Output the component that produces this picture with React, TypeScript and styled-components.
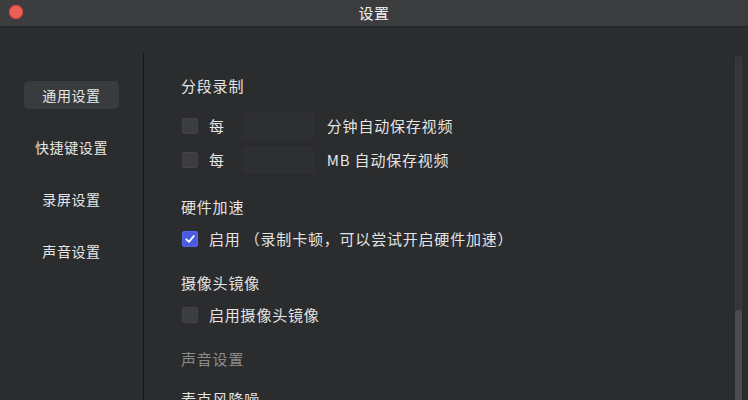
import React from "react";
import styled, { createGlobalStyle } from "styled-components";

const GlobalStyle = createGlobalStyle`
  html, body {
    margin: 0;
    padding: 0;
    background: #2b2c2e;
  }
  body {
    font-family: "Noto Sans CJK SC", "Noto Sans", sans-serif;
    overflow: hidden;
  }
`;

const menuItems = ["通用设置", "快捷键设置", "录屏设置", "声音设置"];

export default function App() {
  return (
    <>
      <GlobalStyle />
      <Window>
        <TitleBar>
          <CloseDot />
          <Title>设置</Title>
        </TitleBar>
        <Body>
          <Sidebar>
            {menuItems.map((item, index) => (
              <MenuItem key={item} $active={index === 0}>
                {item}
              </MenuItem>
            ))}
          </Sidebar>
          <Content>
            <Section $gap={17}>
              <Heading>分段录制</Heading>
              <Rows>
                <OptionRow>
                  <Checkbox />
                  <Label>每</Label>
                  <NumberInput />
                  <Label>分钟自动保存视频</Label>
                </OptionRow>
                <OptionRow>
                  <Checkbox />
                  <Label>每</Label>
                  <NumberInput />
                  <Label>MB 自动保存视频</Label>
                </OptionRow>
              </Rows>
            </Section>
            <Section $gap={12}>
              <Heading>硬件加速</Heading>
              <OptionRow>
                <Checkbox $checked>
                  <svg width="12" height="12" viewBox="0 0 12 12">
                    <path d="M2.3 6.3 L5 8.9 L9.8 3" fill="none" stroke="#fff" strokeWidth="1.8" strokeLinecap="round" strokeLinejoin="round" />
                  </svg>
                </Checkbox>
                <Label>启用 （录制卡顿，可以尝试开启硬件加速）</Label>
              </OptionRow>
            </Section>
            <Section $gap={12}>
              <Heading>摄像头镜像</Heading>
              <OptionRow>
                <Checkbox />
                <Label>启用摄像头镜像</Label>
              </OptionRow>
            </Section>
            <Section $gap={20}>
              <Heading $muted>声音设置</Heading>
              <Heading>麦克风降噪</Heading>
            </Section>
          </Content>
          <ScrollTrack>
            <ScrollThumb />
          </ScrollTrack>
        </Body>
      </Window>
    </>
  );
}

const Window = styled.div`
  width: 748px;
  height: 400px;
  display: flex;
  flex-direction: column;
  background: #2b2c2e;
  overflow: hidden;
`;

const TitleBar = styled.div`
  height: 26px;
  flex-shrink: 0;
  display: flex;
  align-items: center;
  justify-content: center;
  position: relative;
  background: #3b3c3e;
  border-bottom: 1px solid #232426;
`;

const CloseDot = styled.div`
  position: absolute;
  left: 9px;
  top: 5px;
  width: 14px;
  height: 14px;
  border-radius: 50%;
  background: #ec5f57;
  box-shadow: inset 0 0 0 1px #d3483f;
`;

const Title = styled.div`
  color: #f2f2f2;
  font-size: 15px;
  line-height: 20px;
  letter-spacing: 0.5px;
`;

const Body = styled.div`
  flex: 1;
  display: flex;
  min-height: 0;
`;

const Sidebar = styled.div`
  width: 143px;
  flex-shrink: 0;
  margin-top: 26px;
  border-right: 1px solid #17181b;
  display: flex;
  flex-direction: column;
  align-items: center;
  gap: 24px;
  padding-top: 28px;
`;

const MenuItem = styled.div<{ $active?: boolean }>`
  width: 95px;
  height: 28px;
  display: flex;
  align-items: center;
  justify-content: center;
  border-radius: 5px;
  background: ${(p) => (p.$active ? "#3a3b3d" : "transparent")};
  color: #e6e6e6;
  font-size: 14px;
  letter-spacing: 0.6px;
`;

const Content = styled.div`
  flex: 1;
  padding: 49px 0 0 37px;
  display: flex;
  flex-direction: column;
  gap: 24px;
`;

const Section = styled.div<{ $gap: number }>`
  display: flex;
  flex-direction: column;
  gap: ${(p) => p.$gap}px;
`;

const Heading = styled.div<{ $muted?: boolean }>`
  font-size: 15px;
  line-height: 20px;
  letter-spacing: 0.8px;
  color: ${(p) => (p.$muted ? "#8a8b8d" : "#e4e4e4")};
`;

const Rows = styled.div`
  display: flex;
  flex-direction: column;
  gap: 8px;
`;

const OptionRow = styled.div`
  display: flex;
  align-items: center;
  min-height: 20px;
`;

const Checkbox = styled.div<{ $checked?: boolean }>`
  width: 16px;
  height: 16px;
  margin-left: 1px;
  margin-right: 11px;
  border-radius: 3px;
  display: flex;
  align-items: center;
  justify-content: center;
  background: ${(p) => (p.$checked ? "#4a5be0" : "#3c3d3f")};
  box-shadow: inset 0 0 0 1px ${(p) => (p.$checked ? "#5668ea" : "#424345")};
`;

const Label = styled.span`
  color: #e4e4e4;
  font-size: 15px;
  line-height: 20px;
  letter-spacing: 0.8px;
  white-space: nowrap;
`;

const NumberInput = styled.div`
  width: 70px;
  height: 26px;
  margin: 0 13px 0 19px;
  border-radius: 3px;
  background: #2e2f31;
  box-shadow: inset 0 0 0 1px #313234, inset 0 -1px 0 #363739;
`;

const ScrollTrack = styled.div`
  width: 7px;
  flex-shrink: 0;
  margin: 29px 6px 0 0;
  border-radius: 4px 4px 0 0;
  background: #353638;
  box-shadow: inset 0 0 0 1px #3a3b3d;
  display: flex;
  flex-direction: column;
`;

const ScrollThumb = styled.div`
  margin-top: auto;
  height: 90px;
  border-radius: 4px 4px 0 0;
  background: #4c4d4f;
`;
